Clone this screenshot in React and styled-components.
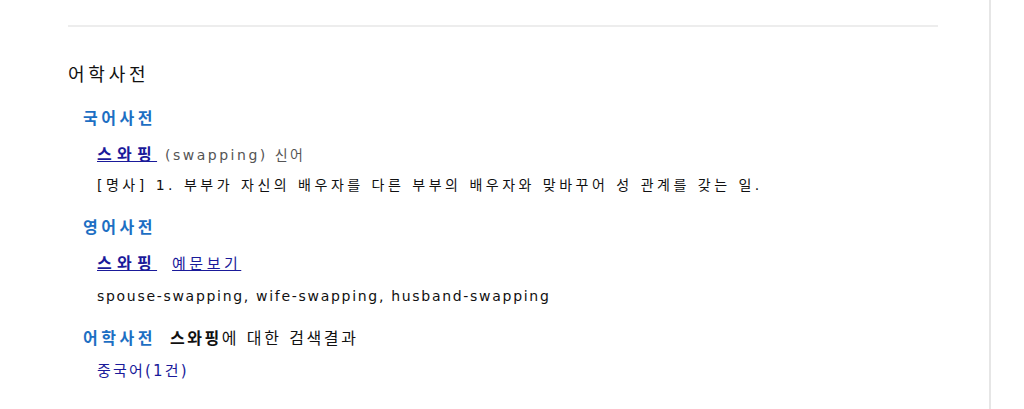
import styled, { createGlobalStyle } from "styled-components";

const Global = createGlobalStyle`
  html, body { margin: 0; padding: 0; background: #fff; }
  body {
    font-family: "DejaVu Sans", "Noto Sans CJK KR", sans-serif;
    color: #222;
  }
`;

const Page = styled.div`
  display: flex;
  height: 409px;
  overflow: hidden;
`;

const Main = styled.div`
  width: 989px;
  padding-left: 68px;
  padding-right: 51px;
  box-sizing: border-box;
`;

const SideRule = styled.div`
  width: 2px;
  background: #e6e6e6;
`;

const TopRule = styled.div`
  margin-top: 25px;
  height: 2px;
  background: #ededed;
`;

const Title = styled.h2`
  margin: 35px 0 0;
  font-size: 18px;
  font-weight: normal;
  line-height: 26px;
  color: #111;
  letter-spacing: 3.8px;
`;

const Section = styled.div`
  padding-left: 15px;
  margin-top: ${(p) => p.$top || 0}px;
`;

const Label = styled.div`
  display: flex;
  align-items: center;
  gap: 14px;
  font-size: 16px;
  font-weight: bold;
  line-height: 22px;
  color: #1d6fc3;
  letter-spacing: 3.5px;
`;

const Query = styled.span`
  color: #111;
  font-weight: normal;
  letter-spacing: 2.6px;
  b { font-weight: bold; }
`;

const Entry = styled.div`
  padding-left: 14px;
  margin-top: ${(p) => p.$top || 0}px;
  font-size: 14px;
  line-height: 22px;
  display: flex;
  align-items: baseline;
  gap: ${(p) => p.$gap || 8}px;
`;

const Word = styled.a`
  color: #1a1a9a;
  font-weight: bold;
  font-size: 16px;
  letter-spacing: 5.3px;
  text-decoration: underline;
`;

const Link = styled.a`
  color: #1a1a9a;
  font-size: 15px;
  letter-spacing: 3.5px;
  text-decoration: underline;
`;

const Muted = styled.span`
  color: #555;
  letter-spacing: 2.5px;
`;

const Body = styled.div`
  padding-left: 14px;
  margin-top: ${(p) => p.$top || 0}px;
  font-size: 14px;
  line-height: 20px;
  color: #111;
  letter-spacing: ${(p) => p.$ls || 3.5}px;
`;

const LangLink = styled.a`
  color: #1a1a9a;
  text-decoration: none;
  font-size: 15px;
  letter-spacing: 2.2px;
`;

export default function App() {
  return (
    <>
      <Global />
      <Page>
        <Main>
          <TopRule />
          <Title>어학사전</Title>
          <Section $top={20}>
            <Label>국어사전</Label>
            <Entry $top={14}>
              <Word href="#">스와핑</Word>
              <Muted>(swapping) 신어</Muted>
            </Entry>
            <Body $top={9}>
              [명사] 1. 부부가 자신의 배우자를 다른 부부의 배우자와 맞바꾸어 성 관계를 갖는 일.
            </Body>
          </Section>
          <Section $top={22}>
            <Label>영어사전</Label>
            <Entry $top={14} $gap={15}>
              <Word href="#">스와핑</Word>
              <Link href="#">예문보기</Link>
            </Entry>
            <Body $top={11} $ls={1.7}>spouse-swapping, wife-swapping, husband-swapping</Body>
          </Section>
          <Section $top={22}>
            <Label>
              어학사전
              <Query>
                <b>스와핑</b>에 대한 검색결과
              </Query>
            </Label>
            <Entry $top={10}>
              <LangLink href="#">중국어(1건)</LangLink>
            </Entry>
          </Section>
        </Main>
        <SideRule />
      </Page>
    </>
  );
}
